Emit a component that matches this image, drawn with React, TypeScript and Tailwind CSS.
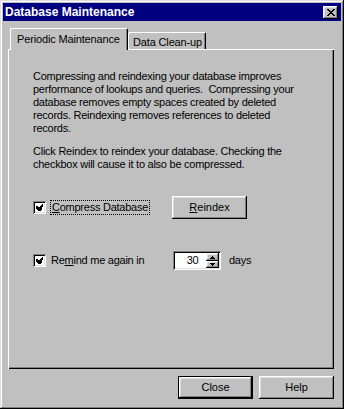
import React from "react";

const raised =
  "shadow-[inset_-1px_-1px_#000,inset_1px_1px_#fff,inset_-2px_-2px_#808080,inset_2px_2px_#dfdfdf]";
const sunken =
  "shadow-[inset_1px_1px_#808080,inset_-1px_-1px_#fff,inset_2px_2px_#000,inset_-2px_-2px_#dfdfdf]";

function Check() {
  return (
    <div className={`w-[13px] h-[13px] bg-white ${sunken} flex items-center justify-center shrink-0`}>
      <svg width="7" height="7" viewBox="0 0 7 7" shapeRendering="crispEdges">
        <path d="M0 2h1v1H0zM0 3h2v1H0zM0 4h3v1H0zM1 5h5v1H1zM2 6h3v1H2z" fill="#000" />
        <path d="M6 0h1v3H6zM5 1h1v4H5zM4 2h1v3H4zM3 3h1v2H3zM1 2h1v3H1zM2 3h1v3H2z" fill="#000" />
      </svg>
    </div>
  );
}

function Btn({ children, def }: { children: React.ReactNode; def?: boolean }) {
  if (def) {
    return (
      <div className="w-[75px] h-[23px] border border-black">
        <div className={`w-full h-full ${raised} flex items-center justify-center`}>{children}</div>
      </div>
    );
  }
  return (
    <div className={`w-[75px] h-[23px] ${raised} flex items-center justify-center`}>{children}</div>
  );
}

export default function App() {
  return (
    <div
      className="w-[344px] h-[409px] bg-[#c0c0c0] p-[3px] flex flex-col text-[11px] leading-[13px] text-black shadow-[inset_-1px_-1px_#000,inset_1px_1px_#dfdfdf,inset_-2px_-2px_#808080,inset_2px_2px_#fff]"
      style={{ fontFamily: '"Liberation Sans", Arial, sans-serif' }}
    >
      <div className="h-[18px] bg-[#000080] flex items-center justify-between pl-[2px] pr-[3px]">
        <span className="text-white font-bold text-[12px] leading-[14px]">Database Maintenance</span>
        <div className={`w-[15px] h-[13px] bg-[#c0c0c0] ${raised} flex items-center justify-center`}>
          <svg width="8" height="7" viewBox="0 0 8 7" shapeRendering="crispEdges">
            <path
              d="M0 0h2v1H0zM6 0h2v1H6zM1 1h2v1H1zM5 1h2v1H5zM2 2h4v1H2zM3 3h2v1H3zM2 4h4v1H2zM1 5h2v1H1zM5 5h2v1H5zM0 6h2v1H0zM6 6h2v1H6z"
              fill="#000"
            />
          </svg>
        </div>
      </div>

      <div className="pl-[5px] pr-[7px] mt-[7px] flex flex-col">
        <div className="h-[21px] flex items-start pl-[2px] tracking-[-0.15px]">
          <div className="relative z-10 h-[22px] w-[118px] bg-[#c0c0c0] border-t border-l border-white border-r border-r-black rounded-t-[2px] shadow-[inset_-1px_0_#808080] flex items-start pt-[4px] pl-[6px]">
            Periodic Maintenance
          </div>
          <div className="mt-[4px] h-[17px] w-[78px] border-t border-l border-white border-r border-r-black rounded-t-[2px] shadow-[inset_-1px_0_#808080] flex items-start pt-[3px] pl-[4px]">
            Data Clean-up
          </div>
        </div>

        <div className="h-[320px] shadow-[inset_1px_1px_#fff,inset_-1px_-1px_#000,inset_-2px_-2px_#808080] pl-[25px] pt-[21px] flex flex-col tracking-[-0.25px]">
          <p className="whitespace-nowrap">
            Compressing and reindexing your database improves
            <br />
            performance of lookups and queries.&nbsp; Compressing your
            <br />
            database removes empty spaces created by deleted
            <br />
            records. Reindexing removes references to deleted
            <br />
            records.
          </p>
          <p className="whitespace-nowrap mt-[10px]">
            Click Reindex to reindex your database. Checking the
            <br />
            checkbox will cause it to also be compressed.
          </p>

          <div className="mt-[25px] h-[23px] flex items-center">
            <div className="w-[139px] flex items-center">
              <Check />
              <span className="ml-[4px] border border-dotted border-black px-[1px] leading-[13px]">
                <u className="underline-offset-[1px]">C</u>ompress Database
              </span>
            </div>
            <Btn>
              <span className="tracking-normal">
                <u className="underline-offset-[1px]">R</u>eindex
              </span>
            </Btn>
          </div>

          <div className="mt-[31px] h-[21px] flex items-center">
            <div className="w-[140px] flex items-center">
              <Check />
              <span className="ml-[5px]">
                Re<u className="underline-offset-[1px]">m</u>ind me again in
              </span>
            </div>
            <div className={`w-[48px] h-[19px] bg-white ${sunken} flex items-center pl-[2px] pr-[2px]`}>
              <div className="flex-1 text-center pl-[4px]">30</div>
              <div className="w-[13px] h-[15px] flex flex-col">
                <div className={`h-[8px] bg-[#c0c0c0] ${raised} flex items-center justify-center`}>
                  <svg width="5" height="3" viewBox="0 0 5 3" shapeRendering="crispEdges">
                    <path d="M2 0h1v1H2zM1 1h3v1H1zM0 2h5v1H0z" fill="#000" />
                  </svg>
                </div>
                <div className={`h-[7px] bg-[#c0c0c0] ${raised} flex items-center justify-center`}>
                  <svg width="5" height="3" viewBox="0 0 5 3" shapeRendering="crispEdges">
                    <path d="M0 0h5v1H0zM1 1h3v1H1zM2 2h1v1H2z" fill="#000" />
                  </svg>
                </div>
              </div>
            </div>
            <span className="ml-[8px]">days</span>
          </div>
        </div>

        <div className="mt-[7px] flex justify-end gap-[6px]">
          <Btn def>Close</Btn>
          <Btn>Help</Btn>
        </div>
      </div>
    </div>
  );
}
